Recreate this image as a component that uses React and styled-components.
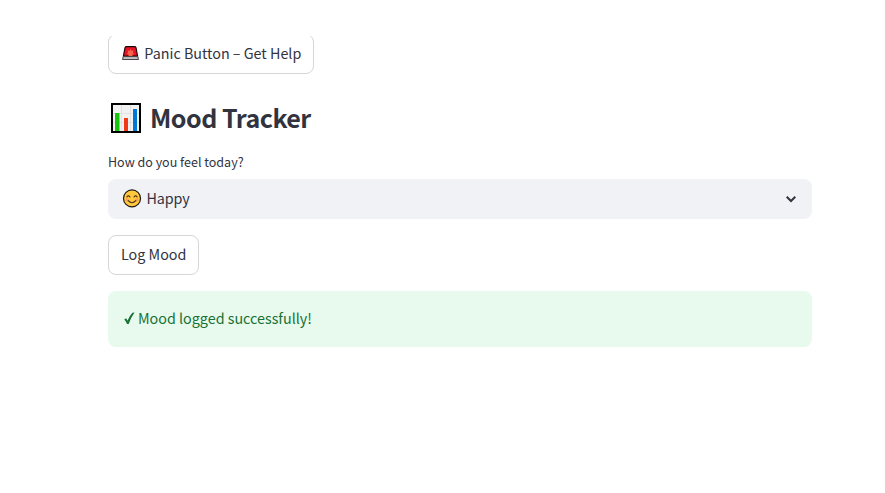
import React from "react";
import styled, { createGlobalStyle } from "styled-components";

const GlobalStyle = createGlobalStyle`
  *, *::before, *::after { box-sizing: border-box; }
  body {
    margin: 0;
    background: #fff;
    color: #31333f;
    font-family: "Noto Sans CJK SC", "Noto Sans", sans-serif;
    font-size: 14.32px;
  }
`;

const Page = styled.div`
  height: 493px;
  padding-top: 36px;
  overflow: hidden;
`;

const ScrollArea = styled.main`
  height: 457px;
  overflow: hidden;
`;

const Content = styled.div`
  display: flex;
  flex-direction: column;
  align-items: flex-start;
  width: 704px;
  margin: -2px 0 0 108px;
`;

const Button = styled.button`
  display: flex;
  align-items: center;
  justify-content: flex-start;
  gap: 5.3px;
  width: ${(p) => p.$width}px;
  height: 40px;
  padding: 0 0 3px ${(p) => p.$inset || 12}px;
  border: 1px solid #d6d6d9;
  border-radius: 8px;
  background: #fff;
  color: inherit;
  font: inherit;
  line-height: 24px;
  white-space: nowrap;
`;

const Heading = styled.h2`
  display: flex;
  align-items: center;
  gap: 9px;
  height: 34px;
  margin: 27px 0 0;
  padding-left: 3px;
  font-size: 25.06px;
  font-weight: 600;
  letter-spacing: -0.52px;
  line-height: 34px;
  white-space: nowrap;
`;

const HeadingText = styled.span`
  padding-bottom: 2px;
`;

const Label = styled.label`
  height: 20px;
  margin: 17px 0 7px;
  font-size: 12.53px;
  line-height: 20px;
  white-space: nowrap;
`;

const Select = styled.div`
  display: flex;
  align-items: center;
  gap: 4.5px;
  width: 100%;
  height: 40px;
  margin-bottom: 16px;
  padding: 0 13px 2px 14px;
  border-radius: 8px;
  background: #f0f2f6;
  line-height: 24px;
`;

const Value = styled.span`
  flex: 1;
  letter-spacing: -0.1px;
`;

const Alert = styled.div`
  display: flex;
  align-items: center;
  gap: 3px;
  width: 100%;
  height: 56px;
  margin-top: 16px;
  padding: 0 16px 2px;
  border-radius: 8px;
  background: #e8f9ee;
  color: #177233;
  line-height: 24px;
`;

const Icon = styled.svg`
  display: block;
  flex: none;
  margin-top: ${(p) => p.$drop || 0}px;
`;

const Siren = () => (
  <Icon width="17" height="15" viewBox="0 0 17 15" $drop={2}>
    <path d="M3 1.6Q3.4.6 4.5.6h8q1.1 0 1.5 1L15.6 10H1.4Z" fill="#e81224" stroke="#16090a" strokeWidth="1.1" />
    <path d="m8.5 3.2 1.1 1.6 1.9-.2-.6 1.9 1.2 1.6-1.6.4v1.5h-4V8.5l-1.6-.4 1.2-1.6-.6-1.9 1.9.2Z" fill="#f4634a" />
    <path d="M1.2 10.6h14.6l.7 2.9H.5Z" fill="#c5c3c5" stroke="#343236" strokeWidth=".9" />
  </Icon>
);

const Chart = () => (
  <Icon width="30" height="30" viewBox="0 0 30 30">
    <path d="M1 1h28v28H1Z" fill="#f2f2f2" stroke="#000" strokeWidth="2" />
    <path d="M2 10.5h26M2 19.5h26M10.5 2v26M19.5 2v26" stroke="#e2e2e4" />
    <path d="M4 10h4.5v18H4Z" fill="#16c60c" />
    <path d="M13 15h4v13h-4Z" fill="#f03a17" />
    <path d="M22 6h4v22h-4Z" fill="#0078d7" />
  </Icon>
);

const Smile = () => (
  <Icon width="20" height="20" viewBox="0 0 20 20">
    <circle cx="10" cy="10.4" r="8.5" fill="#ffc83d" stroke="#1d1914" strokeWidth="1.2" />
    <circle cx="5.2" cy="11.9" r="1.7" fill="#ff9a5c" />
    <circle cx="14.8" cy="11.9" r="1.7" fill="#ff9a5c" />
    <path d="M4.8 9q1.6-2.2 3.2 0M12 9q1.6-2.2 3.2 0M6.2 12.7q3.8 4 7.6 0" fill="none" stroke="#4c3518" strokeWidth="1.1" strokeLinecap="round" />
  </Icon>
);

const Chevron = () => (
  <Icon width="16" height="16" viewBox="0 0 16 16">
    <path d="m3.7 6.8 4.3 4.2 4.3-4.2" fill="none" stroke="#31333f" strokeWidth="2" />
  </Icon>
);

const Check = () => (
  <Icon width="11" height="13" viewBox="0 0 11 13" $drop={1}>
    <path d="M.3 7.6 2 6.3q1.1 1.1 1.5 2.4Q5.7 3.7 8.4.8l2.1-.4Q6.9 5.4 4.7 12H3Q2 9.2.3 7.6Z" fill="#177233" />
  </Icon>
);

export default function App() {
  return (
    <>
      <GlobalStyle />
      <Page>
        <ScrollArea>
          <Content>
            <Button $width={206} $inset={13}>
              <Siren />
              <span>Panic Button – Get Help</span>
            </Button>
            <Heading>
              <Chart />
              <HeadingText>Mood Tracker</HeadingText>
            </Heading>
            <Label>How do you feel today?</Label>
            <Select>
              <Smile />
              <Value>Happy</Value>
              <Chevron />
            </Select>
            <Button $width={91}>Log Mood</Button>
            <Alert>
              <Check />
              <span>Mood logged successfully!</span>
            </Alert>
          </Content>
        </ScrollArea>
      </Page>
    </>
  );
}
